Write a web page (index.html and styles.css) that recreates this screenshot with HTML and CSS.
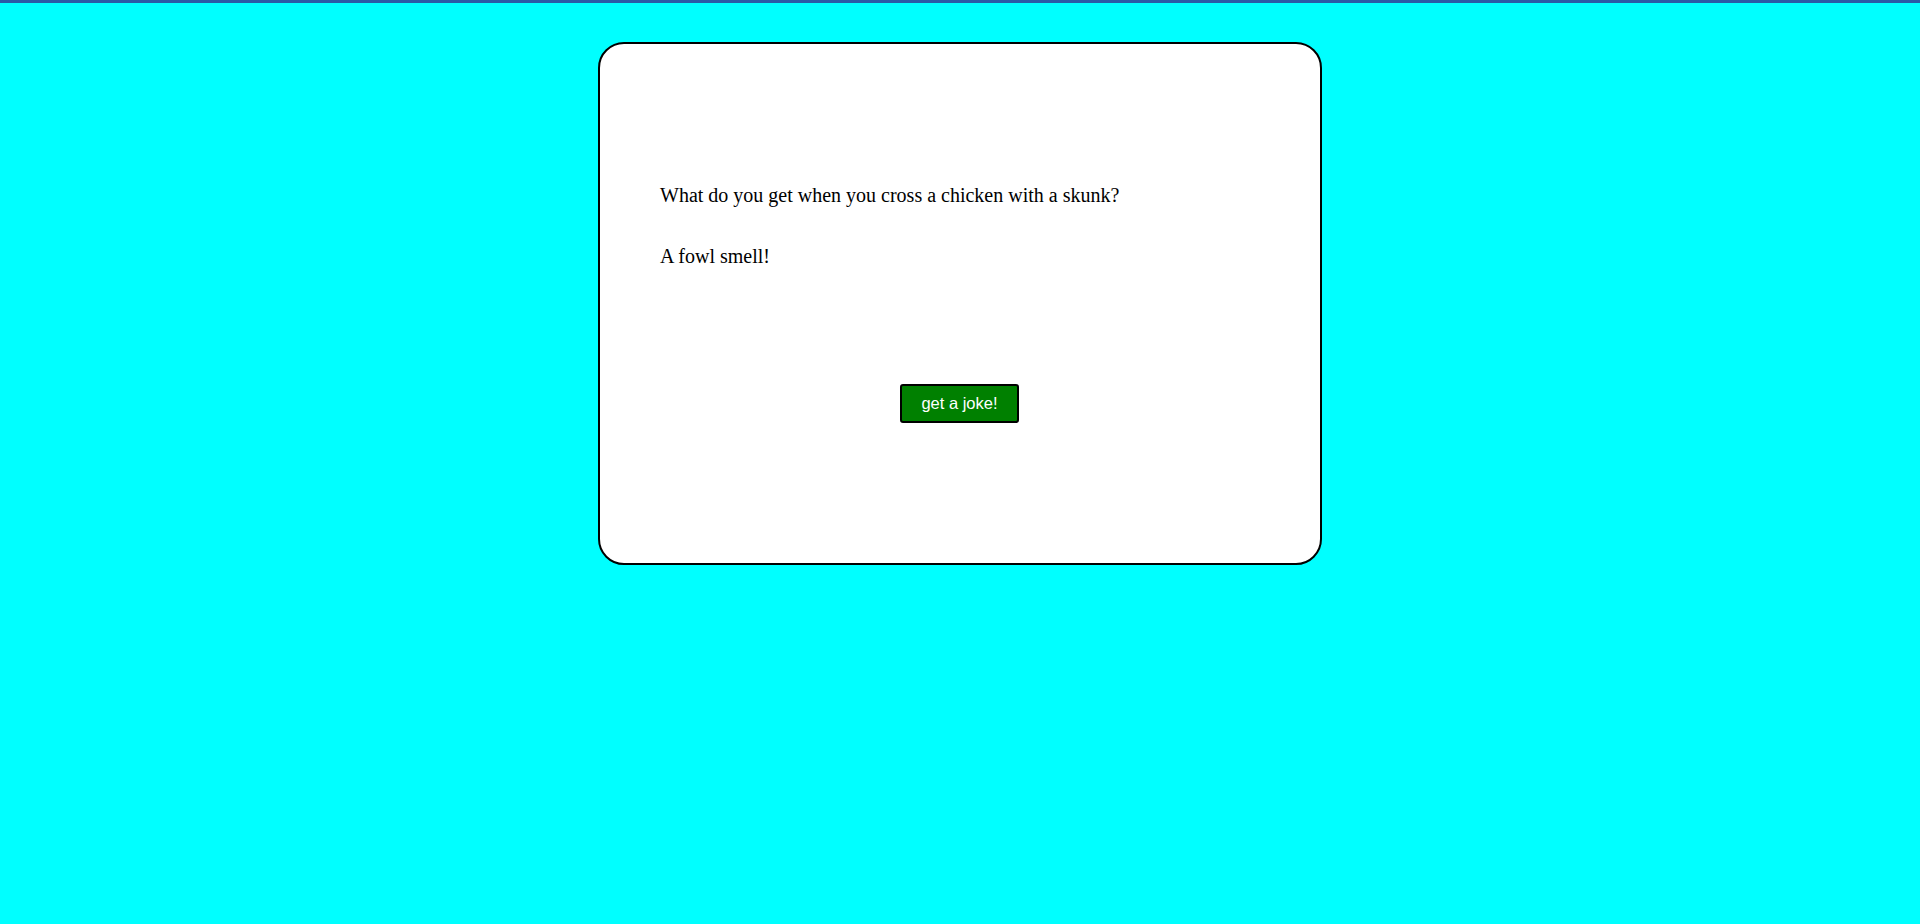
FILE: index.html
```html
<!DOCTYPE html>
<html lang="en">
<head>
<meta charset="utf-8">
<title>Jokes</title>
<link rel="stylesheet" href="styles.css">
</head>
<body>
<div class="topbar"></div>
<main class="page">
  <section class="card">
    <p class="setup">What do you get when you cross a chicken with a skunk?</p>
    <p class="punchline">A fowl smell!</p>
    <div class="actions">
      <button class="joke-btn" type="button">get a joke!</button>
    </div>
  </section>
</main>
</body>
</html>
```
FILE: styles.css
```css
html, body {
  margin: 0;
  padding: 0;
}
body {
  background: #00ffff;
  font-family: "Liberation Serif", "Times New Roman", serif;
  min-height: 924px;
}
.topbar {
  height: 3px;
  background: #2a5aa6;
}
.page {
  display: flex;
  justify-content: center;
  padding-top: 39px;
}
.card {
  box-sizing: border-box;
  width: 724px;
  height: 523px;
  background: #ffffff;
  border: 2px solid #000000;
  border-radius: 26px;
  padding: 141px 60px 0 60px;
  display: flex;
  flex-direction: column;
}
.setup, .punchline {
  margin: 0;
  font-size: 20px;
  line-height: 21px;
  color: #000000;
}
.punchline {
  margin-top: 40px;
}
.actions {
  display: flex;
  justify-content: center;
  margin-top: 117px;
}
.joke-btn {
  box-sizing: border-box;
  width: 119px;
  height: 39px;
  margin-right: 1px;
  background: #008000;
  color: #ffffff;
  border: 2px solid #000000;
  border-radius: 3px;
  font-family: "Liberation Sans", Arial, sans-serif;
  font-size: 16.5px;
  padding: 0;
  cursor: pointer;
}
```
